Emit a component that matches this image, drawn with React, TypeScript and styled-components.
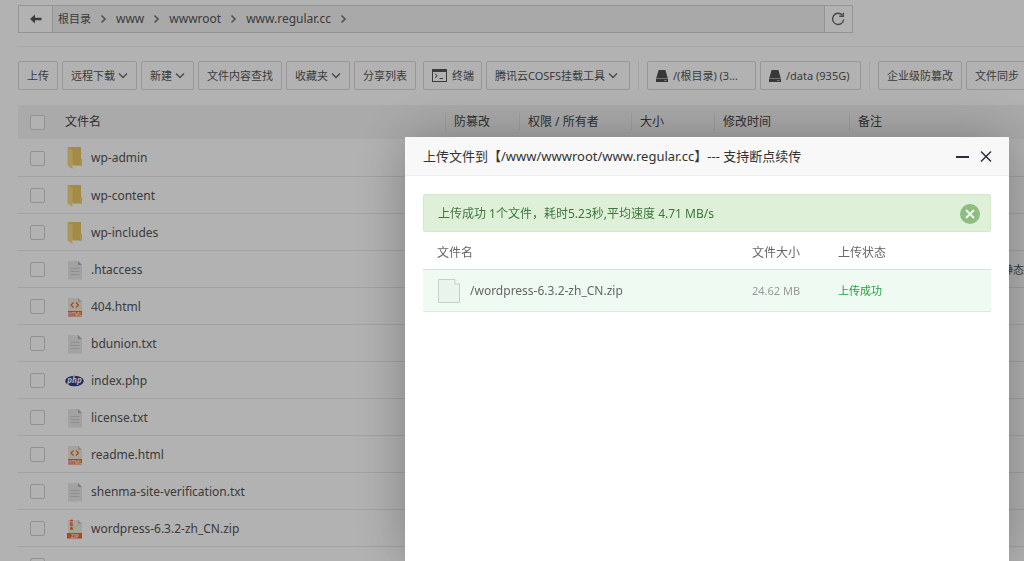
import React from "react";
import styled, { createGlobalStyle } from "styled-components";

const GlobalStyle = createGlobalStyle`
  * { box-sizing: border-box; }
  body {
    margin: 0;
    overflow: hidden;
    background: #fff;
    color: #555;
    font-family: "Noto Sans", "Noto Sans CJK SC", sans-serif;
    font-size: 11px;
    line-height: 16px;
  }
  button, input { font: inherit; color: inherit; margin: 0; }
  a { color: inherit; text-decoration: none; }
`;

const Page = styled.main`
  height: 100vh;
  overflow: hidden;
  padding: 5px 0 0 18px;
`;

const PathBar = styled.nav`
  display: flex;
  align-items: stretch;
  width: 83%;
  height: 28px;
  background: #f3f3f3;
  border: 1px solid #d4d4d4;
`;

const PathButton = styled.button<{ $side: "left" | "right" }>`
  display: flex;
  align-items: center;
  justify-content: center;
  width: ${(p) => (p.$side === "left" ? 34 : 28)}px;
  padding: 0;
  background: #fff;
  border: 0 solid #d4d4d4;
  border-${(p) => (p.$side === "left" ? "right" : "left")}-width: 1px;
`;

const Crumbs = styled.div`
  display: flex;
  flex: 1;
  align-items: center;
  gap: 9px;
  padding-left: 5px;
  font-size: 12px;
`;

const RootCrumb = styled.a`
  font-size: 11px;
`;

const Toolbar = styled.div`
  display: flex;
  gap: 4px;
  margin-top: 13px;
  padding: 14px 0 15px;
  border-top: 1px solid #f0f0f0;
  overflow: hidden;
`;

const ToolButton = styled.button<{ $width?: number }>`
  display: flex;
  flex: none;
  align-items: center;
  gap: 3px;
  min-width: ${(p) => p.$width ?? 39}px;
  height: 29px;
  padding: 0 8px;
  background: #fff;
  border: 1px solid #d8d8d8;
  border-radius: 2px;
  white-space: nowrap;
`;

const IconButton = styled(ToolButton)`
  gap: 5px;
  padding: 0 7px 0 8px;
`;

const TerminalButton = styled(IconButton)`
  margin-left: 3px;
`;

const Divider = styled.span`
  flex: none;
  width: 1px;
  margin: 0 4px;
  background: #ececec;
`;

const Files = styled.table`
  width: 100%;
  table-layout: fixed;
  border-collapse: collapse;
`;

const HeadCell = styled.th<{ $width?: number; $ruled?: boolean }>`
  width: ${(p) => (p.$width ? `${p.$width}px` : "auto")};
  height: 34px;
  padding: 0 9px;
  background: ${(p) =>
    p.$ruled
      ? "linear-gradient(#e4e4e4, #e4e4e4) left center / 1px 18px no-repeat #f4f4f4"
      : "#f4f4f4"};
  color: #444;
  font-size: 12px;
  font-weight: 400;
  text-align: left;
  white-space: nowrap;
`;

const Cell = styled.td`
  height: 37px;
  padding: 2px 9px 0;
  border-bottom: 1px solid #e8e8e8;
  white-space: nowrap;
`;

const CheckCell = styled(Cell)`
  padding: 2px 0 0 12px;
`;

const CheckHead = styled(HeadCell)`
  padding: 0 0 0 12px;
`;

const NoteCell = styled(Cell)`
  padding: 2px 0 0;
  text-align: right;
`;

const Check = styled.input`
  display: block;
  appearance: none;
  width: 15px;
  height: 15px;
  background: #fff;
  border: 1px solid #d2d2d2;
  border-radius: 2px;
`;

const FileLink = styled.a`
  display: flex;
  align-items: center;
  gap: 7px;
  font-size: 12px;
`;

const Shade = styled.div`
  position: fixed;
  inset: 0;
  background: rgba(0, 0, 0, 0.3);
`;

const Dialog = styled.section`
  position: fixed;
  top: 137px;
  right: 15px;
  bottom: 0;
  left: 405px;
  background: #fff;
  box-shadow: 1px 1px 50px rgba(0, 0, 0, 0.3);
`;

const DialogHead = styled.header`
  display: flex;
  align-items: center;
  gap: 10px;
  height: 39px;
  padding: 0 16px 0 18px;
  background: #f8f8f8;
  border-bottom: 1px solid #eee;
`;

const DialogTitle = styled.h1`
  flex: 1;
  margin: 0;
  color: #333;
  font-size: 13px;
  font-weight: 400;
  white-space: nowrap;
`;

const PlainButton = styled.button`
  display: flex;
  padding: 0;
  background: none;
  border: 0;
`;

const DialogBody = styled.div`
  padding: 18px;
`;

const Notice = styled.div`
  display: flex;
  align-items: center;
  justify-content: space-between;
  height: 38px;
  padding: 1px 10px 0 14px;
  background: #dff0d8;
  border: 1px solid #d6e9c6;
  border-radius: 2px;
  color: #3c763d;
  font-size: 12px;
`;

const Uploads = styled.table`
  width: 100%;
  table-layout: fixed;
  border-collapse: collapse;
`;

const UploadHead = styled.th<{ $width?: number }>`
  width: ${(p) => (p.$width ? `${p.$width}px` : "auto")};
  height: 37px;
  padding: 6px 0 0 14px;
  border-bottom: 1px solid #ddd;
  color: #666;
  font-size: 12px;
  font-weight: 400;
  text-align: left;
`;

const UploadCell = styled.td<{ $color?: string }>`
  height: 42px;
  padding: 2px 0 0 14px;
  background: #eefaf2;
  border-bottom: 1px solid #ddeae1;
  color: ${(p) => p.$color ?? "#666"};
  white-space: nowrap;
`;

const UploadName = styled.span`
  display: flex;
  align-items: center;
  gap: 10px;
  padding-left: 1px;
  font-size: 12px;
`;

const Chevron = () => (
  <svg width="10" height="8" viewBox="0 0 10 8" fill="none" stroke="#666" strokeWidth="1.3">
    <path d="M1 1.5l4 4 4-4" />
  </svg>
);

const CrumbArrow = () => (
  <svg width="7" height="10" viewBox="0 0 7 10" fill="none" stroke="#777" strokeWidth="1.7">
    <path d="M1.5 1.5L5 5 1.5 8.5" />
  </svg>
);

const BackIcon = () => (
  <svg width="12" height="10" viewBox="0 0 12 10" fill="#555">
    <path d="M0 5L5 .5V3.7H11.5V6.3H5V9.5z" />
  </svg>
);

const RefreshIcon = () => (
  <svg width="14" height="14" viewBox="0 0 14 14" fill="none" stroke="#666" strokeWidth="1.4">
    <path d="M12.7 7.5A5.6 5.6 0 1 1 11.2 3" />
    <path d="M8.3 4.3H12.3V.8" />
  </svg>
);

const TerminalIcon = () => (
  <svg width="15" height="13" viewBox="0 0 15 13" fill="none" stroke="#555" strokeWidth="1">
    <rect x=".5" y=".5" width="14" height="12" />
    <path d="M1 2h13" strokeWidth="2" />
    <path d="M3 4.8l2.3 2L3 8.8M7.5 9.5H11" />
  </svg>
);

const DriveIcon = () => (
  <svg width="12" height="12" viewBox="0 0 12 12" fill="#505050">
    <path d="M2.6 0h6.8l2.3 8H.3zM0 8.600h12V12H0z" />
    <path d="M8 10.500h2.500" stroke="#aaa" />
  </svg>
);

type Kind = "folder" | "text" | "html" | "php" | "zip";

const FileIcon = ({ kind }: { kind: Kind }) => {
  if (kind === "folder")
    return (
      <svg width="19" height="22" viewBox="0 0 19 22">
        <path d="M3 0H16V12H17V18.5H8L3 10z" fill="#eac863" />
        <path d="M2.5 0L7.5 3V22L2.5 18.5z" fill="#f5d985" />
        <path d="M15 12.5h2v6h-2z" fill="#f5d06a" />
      </svg>
    );
  if (kind === "php")
    return (
      <svg width="19" height="22" viewBox="0 0 19 22">
        <ellipse cx="9.5" cy="11" rx="9.3" ry="5.3" fill="#343c8c" />
        <text x="9.5" y="13.3" textAnchor="middle" fontSize="8" fontStyle="italic" fontWeight="700" fill="#fff">
          php
        </text>
      </svg>
    );
  if (kind === "text")
    return (
      <svg width="19" height="22" viewBox="0 0 19 22">
        <path d="M3 2H13L17 6V20.500H3z" fill="#e8e8e8" />
        <path d="M13 2L17 6H13z" fill="#b0b0b0" />
        <path d="M5.500 9.500H14.500M5.500 12.500H14.500M5.500 15.500H14.500" stroke="#ccc" />
      </svg>
    );
  return (
    <svg width="19" height="22" viewBox="0 0 19 22">
      <path d="M3 2H13L17 6V15H3z" fill="#eeeadf" />
      <path d="M13 2L17 6H13z" fill="#c9c6bd" />
      <path d={kind === "zip" ? "M2 15H17V20.500H2z" : "M3 15H17V20.500H3z"} fill="#f26632" />
      {kind === "html" ? (
        <path d="M8.500 6.500L6 9l2.500 2.500M11 6.500L13.500 9 11 11.500" fill="none" stroke="#f26632" strokeWidth="1.200" />
      ) : (
        <path d="M5 2.500H8M5 5H7.500M5 7H8M5.500 9.500H7.500M5 11H8" fill="none" stroke="#f26632" strokeWidth="1.300" />
      )}
      <text x="10" y="19.700" textAnchor="middle" fontSize="5" fontWeight="700" fill="#ffe2d4">
        {kind === "html" ? "HTML" : "ZIP"}
      </text>
    </svg>
  );
};

const BlankFileIcon = () => (
  <svg width="22" height="24" viewBox="0 0 22 24" fill="#eaf3ec" stroke="#c6d0c9">
    <path d="M.5.5H17L21.500 5V23.500H.5z" />
    <path d="M17 .5V5H21.500" fill="#fff" />
  </svg>
);

const files: { name: string; kind: Kind; note?: string }[] = [
  { name: "wp-admin", kind: "folder" },
  { name: "wp-content", kind: "folder" },
  { name: "wp-includes", kind: "folder" },
  { name: ".htaccess", kind: "text", note: "静态" },
  { name: "404.html", kind: "html" },
  { name: "bdunion.txt", kind: "text" },
  { name: "index.php", kind: "php" },
  { name: "license.txt", kind: "text" },
  { name: "readme.html", kind: "html" },
  { name: "shenma-site-verification.txt", kind: "text" },
  { name: "wordpress-6.3.2-zh_CN.zip", kind: "zip" },
];

export default function App() {
  return (
    <>
      <GlobalStyle />
      <Page>
        <PathBar>
          <PathButton $side="left" aria-label="返回">
            <BackIcon />
          </PathButton>
          <Crumbs>
            <RootCrumb href="#">根目录</RootCrumb>
            <CrumbArrow />
            <a href="#">www</a>
            <CrumbArrow />
            <a href="#">wwwroot</a>
            <CrumbArrow />
            <a href="#">www.regular.cc</a>
            <CrumbArrow />
          </Crumbs>
          <PathButton $side="right" aria-label="刷新">
            <RefreshIcon />
          </PathButton>
        </PathBar>

        <Toolbar>
          <ToolButton>上传</ToolButton>
          <ToolButton>远程下载<Chevron /></ToolButton>
          <ToolButton>新建<Chevron /></ToolButton>
          <ToolButton>文件内容查找</ToolButton>
          <ToolButton>收藏夹<Chevron /></ToolButton>
          <ToolButton>分享列表</ToolButton>
          <TerminalButton><TerminalIcon />终端</TerminalButton>
          <ToolButton $width={144}>腾讯云COSFS挂载工具<Chevron /></ToolButton>
          <Divider />
          <IconButton $width={109}><DriveIcon />/(根目录) (3...</IconButton>
          <IconButton $width={101}><DriveIcon />/data (935G)</IconButton>
          <Divider />
          <ToolButton>企业级防篡改</ToolButton>
          <ToolButton>文件同步</ToolButton>
        </Toolbar>

        <Files>
          <thead>
            <tr>
              <CheckHead $width={38}>
                <Check type="checkbox" aria-label="全选" />
              </CheckHead>
              <HeadCell $width={389}>文件名</HeadCell>
              <HeadCell $width={74} $ruled>防篡改</HeadCell>
              <HeadCell $width={112} $ruled>权限 / 所有者</HeadCell>
              <HeadCell $width={83} $ruled>大小</HeadCell>
              <HeadCell $width={135} $ruled>修改时间</HeadCell>
              <HeadCell $ruled>备注</HeadCell>
            </tr>
          </thead>
          <tbody>
            {files.map((f) => (
              <tr key={f.name}>
                <CheckCell>
                  <Check type="checkbox" aria-label={f.name} />
                </CheckCell>
                <Cell>
                  <FileLink href="#">
                    <FileIcon kind={f.kind} />
                    {f.name}
                  </FileLink>
                </Cell>
                <Cell colSpan={4} />
                <NoteCell>{f.note}</NoteCell>
              </tr>
            ))}
            <tr>
              <CheckCell>
                <Check type="checkbox" aria-label="选择" />
              </CheckCell>
              <Cell colSpan={6} />
            </tr>
          </tbody>
        </Files>
      </Page>

      <Shade />
      <Dialog role="dialog" aria-labelledby="upload-title">
        <DialogHead>
          <DialogTitle id="upload-title">
            上传文件到【/www/wwwroot/www.regular.cc】--- 支持断点续传
          </DialogTitle>
          <PlainButton aria-label="最小化">
            <svg width="14" height="14" viewBox="0 0 14 14" stroke="#2e2d3c" strokeWidth="2">
              <path d="M1 8H14" />
            </svg>
          </PlainButton>
          <PlainButton aria-label="关闭">
            <svg width="14" height="14" viewBox="0 0 14 14" stroke="#2e2d3c" strokeWidth="1.500">
              <path d="M2 2.500L12 12.500M12 2.500L2 12.500" />
            </svg>
          </PlainButton>
        </DialogHead>
        <DialogBody>
          <Notice role="status">
            <span>上传成功 1个文件，耗时5.23秒,平均速度 4.71 MB/s</span>
            <PlainButton aria-label="关闭提示">
              <svg width="20" height="20" viewBox="0 0 20 20">
                <circle cx="10" cy="10" r="10" fill="#8fbc80" />
                <path d="M6 6L14 14M14 6L6 14" stroke="#eef7ea" strokeWidth="2" />
              </svg>
            </PlainButton>
          </Notice>
          <Uploads>
            <thead>
              <tr>
                <UploadHead>文件名</UploadHead>
                <UploadHead $width={86}>文件大小</UploadHead>
                <UploadHead $width={167}>上传状态</UploadHead>
              </tr>
            </thead>
            <tbody>
              <tr>
                <UploadCell>
                  <UploadName>
                    <BlankFileIcon />
                    /wordpress-6.3.2-zh_CN.zip
                  </UploadName>
                </UploadCell>
                <UploadCell $color="#999">24.62 MB</UploadCell>
                <UploadCell $color="#20a53a">上传成功</UploadCell>
              </tr>
            </tbody>
          </Uploads>
        </DialogBody>
      </Dialog>
    </>
  );
}
